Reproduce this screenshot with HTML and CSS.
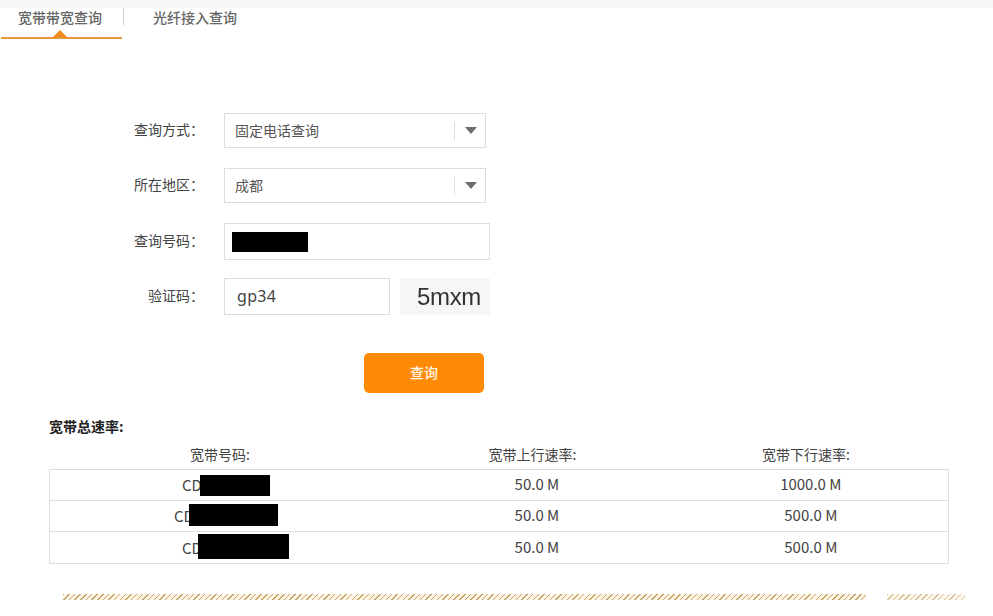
FILE: index.html
```html
<!DOCTYPE html>
<html lang="zh-CN">
<head>
<meta charset="utf-8">
<title>宽带带宽查询</title>
<link rel="stylesheet" href="styles.css">
</head>
<body>
<div class="topbar"></div>
<nav class="tabs">
  <div class="tab tab-active">宽带带宽查询</div>
  <div class="tab-sep"></div>
  <div class="tab tab-other">光纤接入查询</div>
</nav>
<form class="form">
  <div class="row">
    <label class="label">查询方式：</label>
    <div class="select"><span class="select-value">固定电话查询</span><span class="select-sep"></span><span class="select-arrow"></span></div>
  </div>
  <div class="row">
    <label class="label">所在地区：</label>
    <div class="select"><span class="select-value">成都</span><span class="select-sep"></span><span class="select-arrow"></span></div>
  </div>
  <div class="row row-number">
    <label class="label">查询号码：</label>
    <div class="field field-wide"><span class="redact redact-number"></span></div>
  </div>
  <div class="row row-code">
    <label class="label">验证码：</label>
    <input class="field field-code" type="text" value="gp34">
    <div class="captcha"><span class="captcha-text">5mxm</span></div>
  </div>
  <div class="row-button"><button class="submit" type="button">查询</button></div>
</form>
<section class="result">
  <h2 class="result-title">宽带总速率:</h2>
  <div class="result-head">
    <div class="col col-a">宽带号码:</div>
    <div class="col col-b">宽带上行速率:</div>
    <div class="col col-c">宽带下行速率:</div>
  </div>
  <div class="result-table">
    <div class="result-row">
      <div class="col col-a"><div class="num num-1">CD<span class="redact redact-1"></span></div></div>
      <div class="col col-b cell-b">50.0 M</div>
      <div class="col col-c cell-c">1000.0 M</div>
    </div>
    <div class="result-row">
      <div class="col col-a"><div class="num num-2">CD<span class="redact redact-2"></span></div></div>
      <div class="col col-b cell-b">50.0 M</div>
      <div class="col col-c cell-c">500.0 M</div>
    </div>
    <div class="result-row">
      <div class="col col-a"><div class="num num-3">CD<span class="redact redact-3"></span></div></div>
      <div class="col col-b cell-b">50.0 M</div>
      <div class="col col-c cell-c">500.0 M</div>
    </div>
  </div>
</section>
<div class="stripes">
  <div class="stripe stripe-long"></div>
  <div class="stripe stripe-short"></div>
</div>
</body>
</html>
```
FILE: styles.css
```css
* { box-sizing: border-box; }
html, body { margin: 0; padding: 0; }
body {
  width: 993px;
  height: 616px;
  overflow: hidden;
  background: #fff;
  color: #444;
  font-family: "Noto Sans CJK SC", "Liberation Sans", sans-serif;
  font-size: 14px;
}
.topbar { height: 8px; background: #f7f7f7; }

.tabs { display: flex; height: 31px; align-items: flex-start; }
.tab { font-size: 14px; line-height: 18px; color: #666; font-weight: 500; }
.tab-active {
  position: relative;
  width: 121px;
  height: 31px;
  margin-left: 1px;
  padding-left: 17px;
  border-bottom: 2px solid #e8963a;
}
.tab-active::after {
  content: "";
  position: absolute;
  left: 52px;
  bottom: 0;
  border-left: 7px solid transparent;
  border-right: 7px solid transparent;
  border-bottom: 7px solid #f08a1d;
}
.tab-sep { width: 1px; height: 17px; margin-left: 1px; background: #d0d0d0; }
.tab-other { margin-left: 29px; }

.form { margin-top: 74px; }
.row { display: flex; align-items: center; margin-bottom: 20px; }
.row-code { margin-top: -2px; margin-bottom: 38px; }
.label {
  width: 204px;
  margin-bottom: 4px;
  margin-right: 20px;
  text-align: right;
  line-height: 20px;
  color: #444;
}
.select {
  display: flex;
  align-items: center;
  width: 262px;
  height: 35px;
  padding-left: 10px;
  border: 1px solid #ddd;
  background: #fff;
  color: #555;
}
.select-value { width: 219px; line-height: 20px; margin-bottom: 2px; }
.select-sep { width: 1px; height: 18px; background: #ddd; }
.select-arrow {
  margin-left: 10px;
  border-left: 6px solid transparent;
  border-right: 6px solid transparent;
  border-top: 7px solid #6e6e6e;
}
.field {
  display: block;
  height: 37px;
  border: 1px solid #ddd;
  background: #fff;
}
.field-wide { display: flex; align-items: center; width: 266px; padding-left: 7px; }
.field-code {
  width: 166px;
  margin: 0;
  padding: 0 0 2px 12px;
  font-family: "Noto Sans", sans-serif;
  font-size: 16px;
  letter-spacing: 0.3px;
  color: #444;
  outline: none;
  border-radius: 0;
}
.captcha {
  width: 90px;
  height: 37px;
  margin-left: 10px;
  background: #f6f6f6;
  text-align: center;
  padding-left: 8px;
}
.captcha-text {
  display: block;
  color: #333;
  font-family: "Liberation Sans", sans-serif;
  font-size: 24px;
  line-height: 38px;
  letter-spacing: -0.3px;
  filter: blur(0.5px);
}
.row-button { padding-left: 364px; }
.submit {
  display: block;
  width: 120px;
  height: 40px;
  padding: 0 0 2px;
  border: 0;
  border-radius: 5px;
  background: #ff8a07;
  color: #fff6e4;
  font-family: inherit;
  font-size: 14px;
  font-weight: 500;
}

.result { margin: 23px 44px 0 49px; }
.result-title {
  margin: 0;
  font-size: 14px;
  line-height: 20px;
  font-weight: 700;
  color: #222;
}
.result-head { display: flex; height: 25px; margin-top: 8px; line-height: 20px; color: #444; }
.result-head .col-b { padding-right: 7px; }
.result-table { border: 1px solid #ddd; width: 900px; }
.result-row { display: flex; height: 31px; align-items: center; color: #444; border-bottom: 1px solid #ddd; }
.result-row:last-child { border-bottom: 0; }
.col { text-align: center; line-height: 20px; }
.col-a { width: 342px; }
.col-b { width: 290px; }
.col-c { width: 268px; padding-right: 18px; }
.cell-b { padding-left: 2px; padding-bottom: 2px; font-size: 15px; }
.cell-c { padding-right: 7px; padding-bottom: 2px; font-size: 15px; }
.num {
  display: flex;
  align-items: center;
  height: 20px;
  font-size: 15px;
}
.num-1 { padding-left: 132px; }
.num-2 { padding-left: 124px; }
.num-3 { padding-left: 132px; }
.redact { display: block; background: #000; flex: none; }
.redact-number { width: 76px; height: 20px; }
.redact-1 { width: 70px; height: 21px; margin: 1px 0 0 -2px; }
.redact-2 { width: 89px; height: 22px; margin: 0 0 2px -5px; }
.redact-3 { width: 91px; height: 25px; margin: 0 0 2px -4px; }

.stripes { display: flex; gap: 21px; margin: 30px 0 0 63px; }
.stripe {
  height: 6px;
  background-color: #fdf6e6;
  background-image: repeating-linear-gradient(135deg, #c9a26a 0, #c9a26a 1px, transparent 1px, transparent 4px);
}
.stripe-long { width: 803px; }
.stripe-short { width: 78px; opacity: 0.7; }
```
